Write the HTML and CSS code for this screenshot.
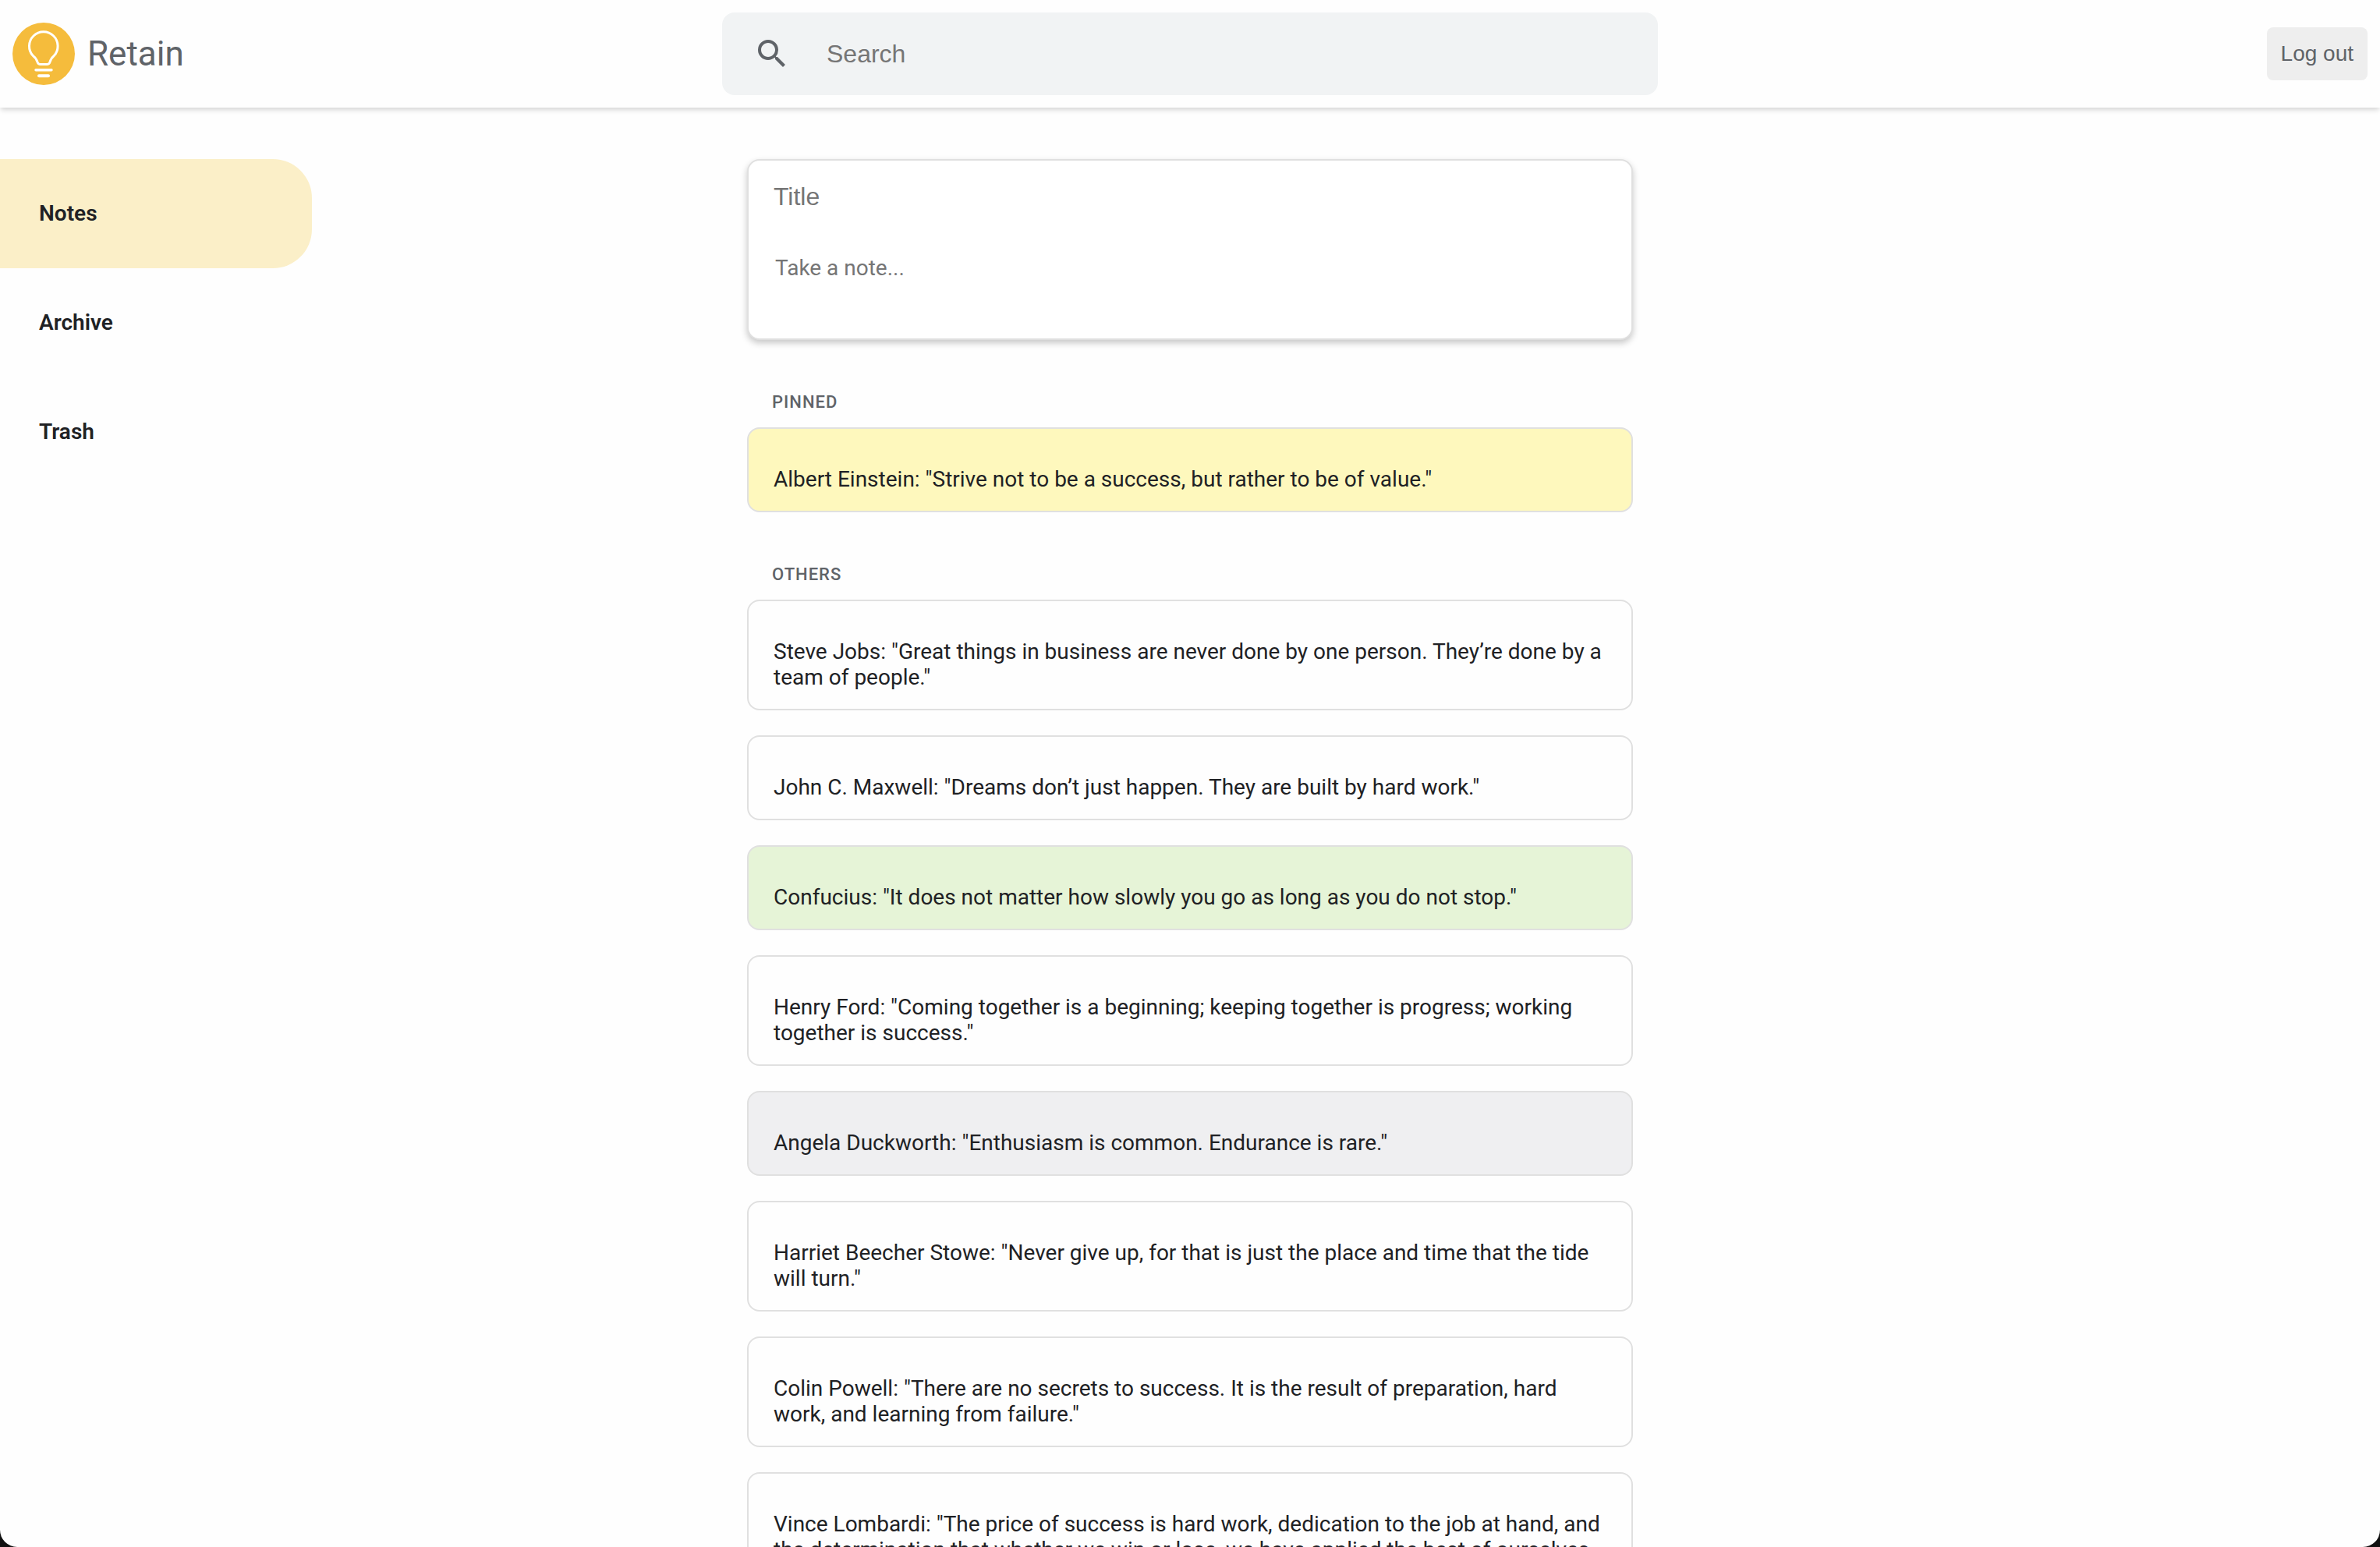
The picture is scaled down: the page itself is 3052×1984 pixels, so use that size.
FILE: index.html
```html
<!DOCTYPE html>
<html lang="en">
<head>
<meta charset="utf-8">
<meta name="viewport" content="width=device-width, initial-scale=1">
<title>Retain</title>
<link rel="stylesheet" href="styles.css">
</head>
<body>
<div class="app">
  <header class="header">
    <a class="brand" href="#">
      <svg class="brand-logo" viewBox="0 0 80 80" aria-hidden="true">
        <circle cx="40" cy="40" r="40" fill="#f5bc3c"/>
        <g fill="none" stroke="#fff" stroke-width="3" stroke-linejoin="round">
          <path d="M36 53.6C33.6 53.6 32.6 52.6 32 50.6C31 47 29.4 44.8 26.4 42.6A18.3 18.3 0 1 1 53.2 42.6C50.4 44.8 49 47 48 50.6C47.4 52.6 46.4 53.6 44 53.6Z"/>
          <path d="M30 60.7H50" stroke-width="3.4" stroke-linecap="round"/>
          <path d="M34 68.3H46" stroke-width="4" stroke-linecap="round"/>
        </g>
      </svg>
      <span class="brand-name">Retain</span>
    </a>
    <form class="search" role="search">
      <button class="search-button" type="button" aria-label="Search">
        <svg class="search-icon" viewBox="0 0 24 24" aria-hidden="true">
          <path fill="currentColor" d="M15.5 14h-.79l-.28-.27A6.471 6.471 0 0 0 16 9.5 6.5 6.5 0 1 0 9.5 16c1.61 0 3.09-.59 4.23-1.57l.27.28v.79l5 4.99L20.49 19l-4.99-5zm-6 0C7.01 14 5 11.99 5 9.5S7.01 5 9.5 5 14 7.01 14 9.5 11.99 14 9.5 14z"/>
        </svg>
      </button>
      <input class="search-input" type="text" placeholder="Search" aria-label="Search">
    </form>
    <div class="header-actions">
      <button class="logout" type="button">Log out</button>
    </div>
  </header>
  <div class="layout">
    <nav class="sidebar">
      <a class="nav-link nav-link-active" href="#notes">Notes</a>
      <a class="nav-link" href="#archive">Archive</a>
      <a class="nav-link" href="#trash">Trash</a>
    </nav>
    <main class="content">
      <form class="composer">
        <input class="composer-title" type="text" placeholder="Title" aria-label="Title">
        <textarea class="composer-body" rows="2" placeholder="Take a note..." aria-label="Note"></textarea>
      </form>
      <section class="notes">
        <h2 class="notes-heading">PINNED</h2>
        <ul class="notes-list">
          <li class="note note-yellow">Albert Einstein: "Strive not to be a success, but rather to be of value."</li>
        </ul>
      </section>
      <section class="notes">
        <h2 class="notes-heading">OTHERS</h2>
        <ul class="notes-list">
          <li class="note">Steve Jobs: "Great things in business are never done by one person. They’re done by a team of people."</li>
          <li class="note">John C. Maxwell: "Dreams don’t just happen. They are built by hard work."</li>
          <li class="note note-green">Confucius: "It does not matter how slowly you go as long as you do not stop."</li>
          <li class="note">Henry Ford: "Coming together is a beginning; keeping together is progress; working together is success."</li>
          <li class="note note-gray">Angela Duckworth: "Enthusiasm is common. Endurance is rare."</li>
          <li class="note">Harriet Beecher Stowe: "Never give up, for that is just the place and time that the tide will turn."</li>
          <li class="note">Colin Powell: "There are no secrets to success. It is the result of preparation, hard work, and learning from failure."</li>
          <li class="note">Vince Lombardi: "The price of success is hard work, dedication to the job at hand, and the determination that whether we win or lose, we have applied the best of ourselves to the task at hand."</li>
        </ul>
      </section>
    </main>
  </div>
</div>
</body>
</html>
```
FILE: styles.css
```css
* {
  box-sizing: border-box;
}

body {
  margin: 0;
  background: #111;
  color: #202124;
  font-family: Roboto, sans-serif;
  font-size: 28px;
  line-height: 33px;
}

button,
input,
textarea {
  margin: 0;
  border: 0;
  background: none;
  outline: none;
  font-family: "Liberation Sans", Arial, sans-serif;
}

::placeholder {
  color: #757575;
  opacity: 1;
}

.app {
  display: flex;
  flex-direction: column;
  height: 100vh;
  overflow: hidden;
  border-radius: 0 0 22px 22px;
  background: #fefefe;
}

.header {
  display: grid;
  grid-template-columns: 1fr minmax(0, 1200px) 1fr;
  align-items: center;
  flex: none;
  z-index: 1;
  padding: 16px;
  background: #fefefe;
  box-shadow: 0 4px 6px -1px rgba(0, 0, 0, 0.16);
}

.brand {
  display: flex;
  align-items: center;
  gap: 16px;
  color: #5f6368;
  text-decoration: none;
}

.brand-logo {
  width: 80px;
  height: 80px;
}

.brand-name {
  font-size: 44px;
  line-height: 52px;
}

.search {
  display: flex;
  align-items: center;
  padding: 5px 16px;
  border-radius: 16px;
  background: #f1f3f4;
}

.search-button {
  display: flex;
  padding: 24px;
  color: #5f6368;
}

.search-icon {
  width: 48px;
  height: 48px;
}

.search-input {
  flex: 1;
  min-width: 0;
  padding: 0 22px;
  font-size: 32px;
  line-height: 36px;
}

.header-actions {
  display: flex;
  justify-content: flex-end;
}

.logout {
  padding: 18px;
  border-radius: 8px;
  background: #eee;
  color: #5f6368;
  font-size: 28px;
  line-height: 32px;
}

.layout {
  display: grid;
  grid-template-columns: 1fr minmax(0, 1136px) 1fr;
  flex: 1;
  min-height: 0;
  overflow-y: auto;
  scrollbar-width: none;
  padding-top: 66px;
}

.sidebar {
  display: flex;
  flex-direction: column;
  width: 400px;
}

.nav-link {
  padding: 53px 50px 54px;
  border-radius: 0 50px 50px 0;
  color: #202124;
  font-weight: 600;
  text-decoration: none;
}

.nav-link-active {
  background: #fbefc8;
}

.composer {
  display: flex;
  flex-direction: column;
  gap: 49px;
  padding: 24px 32px 37px;
  border: 2px solid #e0e0e0;
  border-radius: 16px;
  background: #fff;
  box-shadow: 0 4px 8px 0 rgba(0, 0, 0, 0.22);
}

.composer-title {
  padding: 4px 0;
  font-size: 32px;
  line-height: 36px;
}

.composer-body {
  padding: 4px 2px;
  resize: none;
  font-family: Roboto, sans-serif;
  font-size: 28px;
  line-height: 33px;
}

.notes {
  padding-top: 67px;
}

.notes-heading {
  margin: 0 0 19px;
  padding: 0 32px;
  color: #5f6368;
  font-size: 22px;
  font-weight: 500;
  letter-spacing: 1px;
  line-height: 26px;
}

.notes-list {
  display: flex;
  flex-direction: column;
  gap: 32px;
  margin: 0;
  padding: 0;
  list-style: none;
}

.note {
  padding: 48px 32px 24px;
  border: 2px solid #e0e0e0;
  border-radius: 16px;
}

.note-yellow {
  background: #fef8bd;
}

.note-green {
  background: #e6f4d7;
}

.note-gray {
  background: #efeff1;
}
```
